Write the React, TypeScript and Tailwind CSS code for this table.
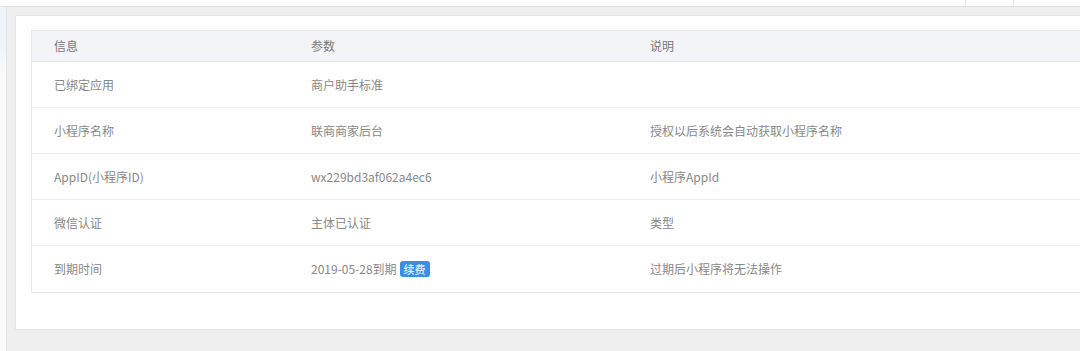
const rows: { label: string; value: string; note: string; renew?: boolean }[] = [
  { label: '已绑定应用', value: '商户助手标准', note: '' },
  { label: '小程序名称', value: '联商商家后台', note: '授权以后系统会自动获取小程序名称' },
  { label: 'AppID(小程序ID)', value: 'wx229bd3af062a4ec6', note: '小程序AppId' },
  { label: '微信认证', value: '主体已认证', note: '类型' },
  { label: '到期时间', value: '2019-05-28到期', note: '过期后小程序将无法操作', renew: true },
]

export default function App() {
  return (
    <div
      className="w-[1080px] h-[351px] overflow-hidden bg-[#efefef] text-[12px] text-[#888]"
      style={{ fontFamily: '"Noto Sans CJK SC", "Noto Sans", sans-serif' }}
    >
      {/* header strip */}
      <div className="flex h-[7px] bg-white border-b border-[#e2e2e2]">
        <div className="flex-1" />
        <div className="w-[48px] border-l border-[#e6e6e6]" />
        <div className="w-[67px] border-l border-[#e6e6e6]" />
      </div>
      <div className="flex h-[344px]">
        {/* sidebar edge */}
        <div className="w-[7px] shrink-0 bg-gradient-to-b from-[#eef4fb] from-10% to-[#fafafa] to-20% border-r border-[#e4e4e4]" />
        <div className="flex-1 min-w-0 pl-[8px] pt-[8px]">
          <div className="w-[1080px] h-[315px] bg-white border border-[#e6e6e6] pl-[15px] pt-[14px]">
            <div className="border-l border-t border-b border-[#e8e8e8]">
              <div className="flex h-[31px] items-center bg-[#f3f4f8] border-b border-[#e4e6ea] text-[#777]">
                <div className="w-[257px] pl-[22px]">信息</div>
                <div className="w-[339px] pl-[22px]">参数</div>
                <div className="flex-1 pl-[22px]">说明</div>
              </div>
              {rows.map((row, i) => (
                <div
                  key={row.label}
                  className={
                    'flex h-[46px] items-center ' + (i < rows.length - 1 ? 'border-b border-[#ececec]' : '')
                  }
                >
                  <div className="w-[257px] pl-[22px]">{row.label}</div>
                  <div className="w-[339px] pl-[22px] flex items-center gap-[3px]">
                    <span>{row.value}</span>
                    {row.renew && (
                      <span className="inline-flex items-center h-[16px] px-[4px] rounded-[3px] bg-[#3a8ee6] text-white text-[11px] leading-none">
                        续费
                      </span>
                    )}
                  </div>
                  <div className="flex-1 pl-[22px]">{row.note}</div>
                </div>
              ))}
            </div>
          </div>
        </div>
      </div>
    </div>
  )
}
